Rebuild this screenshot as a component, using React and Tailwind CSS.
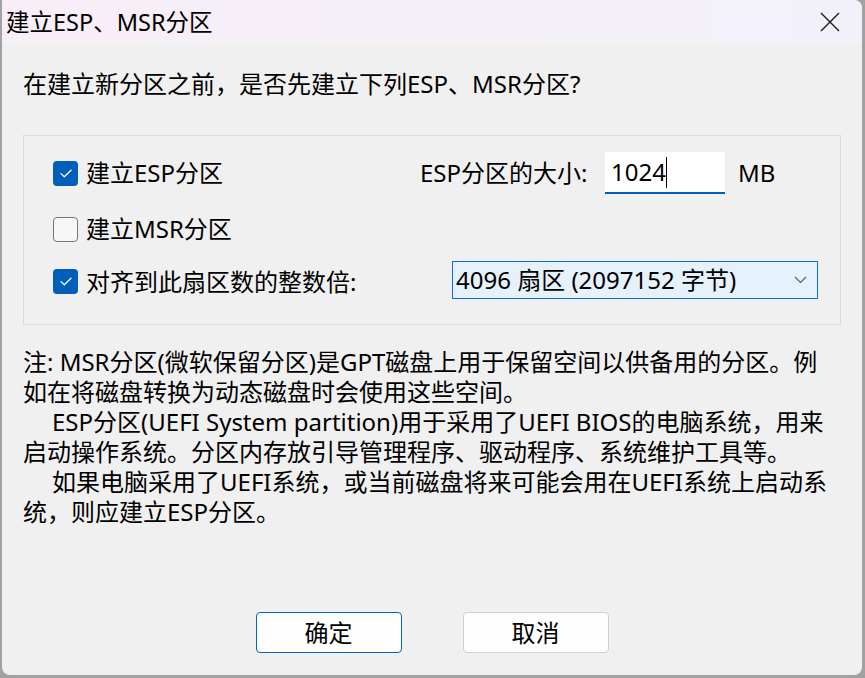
import React from 'react';

function Checkbox({ checked }) {
  if (checked) {
    return (
      <span className="flex h-[25px] w-[25px] shrink-0 items-center justify-center rounded-[4px] bg-[#005fb8]">
        <svg width="12" height="9" viewBox="0 0 12 9" fill="none">
          <path d="M1 4.6 L4.3 7.8 L11 1.2" stroke="white" strokeWidth="1.3" strokeLinecap="round" strokeLinejoin="round" />
        </svg>
      </span>
    );
  }
  return <span className="h-[25px] w-[25px] shrink-0 rounded-[4px] border border-[#767676] bg-[#f7f7f7]" />;
}

export default function App() {
  return (
    <div className="h-[678px] w-[865px] bg-[#a2a2a2] pb-[3px] pl-[2px] pr-[3px] font-['Noto_Sans','Noto_Sans_CJK_SC',sans-serif] text-[24px] text-black">
      <div className="flex h-[675px] flex-col overflow-hidden rounded-b-[8px] rounded-tr-[8px] bg-[#f0f0f0]">
        {/* title bar */}
        <div className="flex h-[44px] shrink-0 items-center justify-between bg-linear-to-r from-[#f8eef7] to-[#f2f1f9] pl-[4px] pr-[22px]">
          <span className="text-[23.5px] leading-[30px]">建立ESP、MSR分区</span>
          <svg width="20" height="20" viewBox="0 0 20 20" fill="none">
            <path d="M1 1 L19 19 M19 1 L1 19" stroke="#1a1a1a" strokeWidth="1.4" />
          </svg>
        </div>

        <div className="flex flex-1 flex-col px-[21px]">
          <div className="mt-[25px] leading-[30px]">在建立新分区之前，是否先建立下列ESP、MSR分区?</div>

          {/* group box */}
          <div className="mt-[36px] h-[190px] border border-[#dadada] pl-[29px]">
            <div className="mt-[16px] flex h-[42px] items-center">
              <div className="flex w-[367px] items-center gap-[8px]">
                <Checkbox checked />
                <span className="leading-[30px]">建立ESP分区</span>
              </div>
              <span className="w-[185px] leading-[30px]">ESP分区的大小:</span>
              <div className="flex h-[42px] w-[120px] items-center border-b-2 border-[#005fb8] bg-white pl-[6px]">
                <span className="leading-[30px]">1024</span>
                <span className="h-[31px] w-px bg-black" />
              </div>
              <span className="ml-[13px] leading-[30px]">MB</span>
            </div>

            <div className="mt-[22px] flex h-[26px] items-center gap-[8px]">
              <Checkbox />
              <span className="leading-[30px]">建立MSR分区</span>
            </div>

            <div className="mt-[19px] flex h-[38px] items-center">
              <div className="mt-[3px] flex w-[399px] items-center gap-[8px]">
                <Checkbox checked />
                <span className="leading-[30px]">对齐到此扇区数的整数倍:</span>
              </div>
              <div className="flex h-[38px] w-[366px] items-center justify-between border border-[#0a6fd0] bg-[#e5f1fb] pl-[3px] pr-[10px]">
                <span className="leading-[30px]">4096 扇区 (2097152 字节)</span>
                <svg width="13" height="8" viewBox="0 0 13 8" fill="none">
                  <path d="M1 1 L6.5 6.5 L12 1" stroke="#5a5a5a" strokeWidth="1.1" />
                </svg>
              </div>
            </div>
          </div>

          {/* note */}
          <div className="mt-[22px] whitespace-nowrap leading-[30px]">
            <div>注: MSR分区(微软保留分区)是GPT磁盘上用于保留空间以供备用的分区。例</div>
            <div>如在将磁盘转换为动态磁盘时会使用这些空间。</div>
            <div className="pl-[29px]">ESP分区(UEFI System partition)用于采用了UEFI BIOS的电脑系统，用来</div>
            <div>启动操作系统。分区内存放引导管理程序、驱动程序、系统维护工具等。</div>
            <div className="pl-[29px]">如果电脑采用了UEFI系统，或当前磁盘将来可能会用在UEFI系统上启动系</div>
            <div>统，则应建立ESP分区。</div>
          </div>

          {/* buttons */}
          <div className="mb-[22px] mt-auto flex justify-center gap-[61px]">
            <button className="h-[41px] w-[146px] rounded-[4px] border border-[#0067c0] bg-[#fdfdfd] leading-[30px]">确定</button>
            <button className="h-[41px] w-[146px] rounded-[4px] border border-[#d0d0d0] bg-[#fdfdfd] leading-[30px]">取消</button>
          </div>
        </div>
      </div>
    </div>
  );
}
